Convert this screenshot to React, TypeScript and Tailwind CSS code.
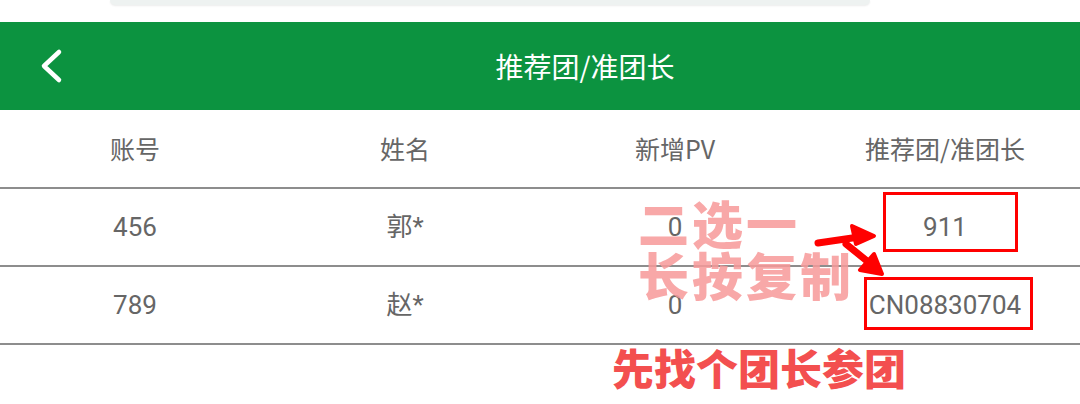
import React from 'react'

const rows = [
  { account: '456', name: '郭*', pv: '0', leader: '911' },
  { account: '789', name: '赵*', pv: '0', leader: 'CN08830704' },
]

const cell = 'flex-1 flex items-center justify-center'

export default function App() {
  return (
    <div
      className="relative w-[1080px] h-[404px] bg-white overflow-hidden"
      style={{ fontFamily: 'Roboto, "Noto Sans CJK SC", sans-serif' }}
    >
      {/* search pill peeking at the top */}
      <div className="h-[22px] flex justify-center">
        <div className="w-[760px] h-[5px] ml-[-100px] bg-[#eef2f1] rounded-b-full shadow-[0_1px_2px_rgba(0,0,0,0.08)]" />
      </div>

      {/* header */}
      <div className="h-[88px] bg-[#0c9340] flex items-center">
        <div className="w-[100px] pl-[38px] flex items-center">
          <svg width="26" height="36" viewBox="0 0 26 36">
            <path d="M21 4 L6 18 L21 32" fill="none" stroke="white" strokeWidth="4.5" strokeLinecap="round" strokeLinejoin="round" />
          </svg>
        </div>
        <div className="flex-1 flex justify-center ml-[-10px] text-white text-[28px]" style={{ fontFamily: '"Noto Sans CJK SC", sans-serif' }}>
          推荐团/准团长
        </div>
      </div>

      {/* table header */}
      <div className="h-[77px] flex text-[25px] text-[#666]" style={{ fontFamily: '"Noto Sans CJK SC", sans-serif' }}>
        <div className={cell}>账号</div>
        <div className={cell}>姓名</div>
        <div className={cell} style={{ fontFamily: '"Noto Sans CJK SC", Roboto, sans-serif' }}>新增PV</div>
        <div className={cell}>推荐团/准团长</div>
      </div>

      {rows.map((r) => (
        <div key={r.account} className="h-[78px] flex text-[26px] text-[#666] border-t-2 border-[#8d8d8d]">
          <div className={cell}>{r.account}</div>
          <div className={cell}>{r.name}</div>
          <div className={cell}>{r.pv}</div>
          <div className={cell}>{r.leader}</div>
        </div>
      ))}
      <div className="border-t-2 border-[#8d8d8d]" />

      {/* annotations */}
      <div className="absolute left-[883px] top-[192px] w-[135px] h-[60px] border-[3px] border-[#ff0000]" />
      <div className="absolute left-[864px] top-[277px] w-[169px] h-[53px] border-[3px] border-[#ff0000]" />

      <div
        className="absolute left-[638px] top-[196px] text-[51px] leading-[52px] font-black text-[#f79a9a] opacity-85 tracking-[3px]"
        style={{ fontFamily: '"Noto Sans CJK SC", sans-serif' }}
      >
        <div>二选一</div>
        <div>长按复制</div>
      </div>

      <svg className="absolute left-0 top-0" width="1080" height="404" viewBox="0 0 1080 404">
        <path d="M818 243 L866 236" stroke="#ff0000" strokeWidth="7" strokeLinecap="round" fill="none" />
        <path d="M852 226 L874 236 L856 244 Z" fill="#ff0000" stroke="#ff0000" strokeWidth="4" strokeLinejoin="round" />
        <path d="M846 244 L872 265" stroke="#ff0000" strokeWidth="7" strokeLinecap="round" fill="none" />
        <path d="M860 270 L882 274 L874 254 Z" fill="#ff0000" stroke="#ff0000" strokeWidth="4" strokeLinejoin="round" />
      </svg>

      <div
        className="absolute left-[612px] top-[344px] text-[42px] leading-[46px] font-black text-[#f34f4f]"
        style={{ fontFamily: '"Noto Sans CJK SC", sans-serif' }}
      >
        先找个团长参团
      </div>
    </div>
  )
}
